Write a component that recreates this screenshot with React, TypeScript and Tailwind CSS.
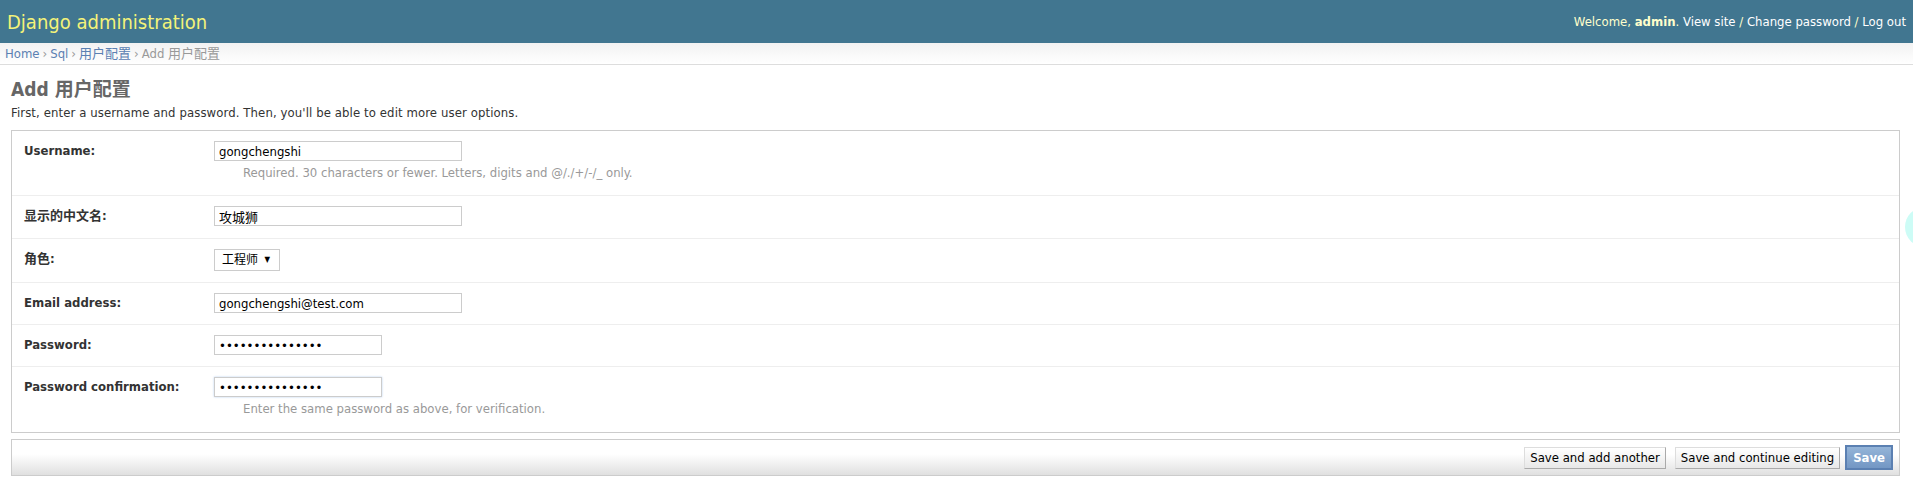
import React from 'react';

const font = 'font-["DejaVu_Sans_Condensed","DejaVu_Sans","Noto_Sans_CJK_SC",sans-serif]';

const rowClass = 'flex px-[12px] pt-[10px] pb-[11px] border-b border-[#eee]';
const labelClass = 'w-[190px] shrink-0 pt-[2px] text-[13px] font-bold text-[#333] leading-[15px]';
const inputClass =
  'block h-[20px] border border-[#ccc] px-[4px] text-[13px] text-black bg-white outline-none';

const Help = ({ children }: { children: React.ReactNode }) => (
  <p className="mt-[4px] mb-[3px] pl-[29px] text-[13px] leading-[16px] text-[#999]">{children}</p>
);

const App = () => {
  return (
    <div className={`relative w-full min-h-[491px] overflow-hidden bg-white ${font}`}>
      {/* header */}
      <div className="flex h-[43px] items-center justify-between bg-[#417690] pl-[7px] pr-[7px]">
        <h1 className="text-[20px] font-normal text-[#f4f379]">Django administration</h1>
        <div className="text-[13px] text-[#ffc]">
          Welcome, <strong className="font-bold">admin</strong>.{' '}
          <a className="text-white">View site</a> / <a className="text-white">Change password</a> /{' '}
          <a className="text-white">Log out</a>
        </div>
      </div>

      {/* breadcrumbs */}
      <div className="flex h-[22px] items-center border-b border-[#ddd] bg-gradient-to-b from-[#f2f2f2] to-white px-[5px] text-[13px] text-[#999]">
        <a className="text-[#5b80b2]">Home</a>
        <span className="px-[3px]">›</span>
        <a className="text-[#5b80b2]">Sql</a>
        <span className="px-[3px]">›</span>
        <a className="text-[#5b80b2]">用户配置</a>
        <span className="px-[3px]">›</span>
        <span>Add 用户配置</span>
      </div>

      {/* content */}
      <div className="pl-[11px] pr-[13px]">
        <h1 className="mt-[12px] text-[19px] font-bold leading-[24px] text-[#666]">Add 用户配置</h1>
        <p className="mt-[4px] text-[13px] leading-[16px] tracking-[0.1px] text-[#333]">
          First, enter a username and password. Then, you'll be able to edit more user options.
        </p>

        <fieldset className="mt-[9px] border border-[#ccc]">
          <div className={rowClass}>
            <label className={labelClass}>Username:</label>
            <div>
              <input className={`${inputClass} w-[248px]`} defaultValue="gongchengshi" readOnly />
              <Help>Required. 30 characters or fewer. Letters, digits and @/./+/-/_ only.</Help>
            </div>
          </div>

          <div className="flex px-[12px] pt-[10px] pb-[12px] border-b border-[#eee]">
            <label className={labelClass}>显示的中文名:</label>
            <input className={`${inputClass} w-[248px]`} defaultValue="攻城狮" readOnly />
          </div>

          <div className={rowClass}>
            <label className={labelClass}>角色:</label>
            <div className="flex h-[22px] w-[66px] items-center justify-between border border-[#ccc] pl-[7px] pr-[9px] text-[12px] text-black">
              <span>工程师</span>
              <span className="text-[8px]">▼</span>
            </div>
          </div>

          <div className={rowClass}>
            <label className={labelClass}>Email address:</label>
            <input className={`${inputClass} w-[248px]`} defaultValue="gongchengshi@test.com" readOnly />
          </div>

          <div className={rowClass}>
            <label className={labelClass}>Password:</label>
            <input type="password" className={`${inputClass} w-[168px]`} defaultValue="gongchengshi123" readOnly />
          </div>

          <div className="flex px-[12px] pt-[10px] pb-[12px]">
            <label className={labelClass}>Password confirmation:</label>
            <div>
              <input
                type="password"
                className={`${inputClass} w-[168px] border-[#8fb0dc] shadow-[0_0_2px_#b8cff0]`}
                defaultValue="gongchengshi123"
                readOnly
              />
              <Help>Enter the same password as above, for verification.</Help>
            </div>
          </div>
        </fieldset>

        {/* submit row */}
        <div className="mt-[6px] flex items-center justify-end border border-[#ccc] bg-gradient-to-b from-white from-40% to-[#e0e0e0] py-[5px] pr-[6px] text-[13px]">
          <button className="h-[22px] border border-[#ddd_#aaa_#aaa_#ddd] bg-gradient-to-b from-white to-[#e8e8e8] px-[5px] text-black">
            Save and add another
          </button>
          <button className="ml-[9px] h-[22px] border border-[#ddd_#aaa_#aaa_#ddd] bg-gradient-to-b from-white to-[#e8e8e8] px-[5px] text-black">
            Save and continue editing
          </button>
          <button className="ml-[5px] h-[25px] border-2 border-[#5b80b2] bg-gradient-to-b from-[#94b4d8] to-[#7397c4] px-[6px] font-bold text-white">
            Save
          </button>
        </div>
      </div>

      {/* floating widget at right edge */}
      <div className="absolute left-[1905px] top-[207px] h-[40px] w-[44px] rounded-full bg-[#cdfcf6]" />
    </div>
  );
};

export default App;
